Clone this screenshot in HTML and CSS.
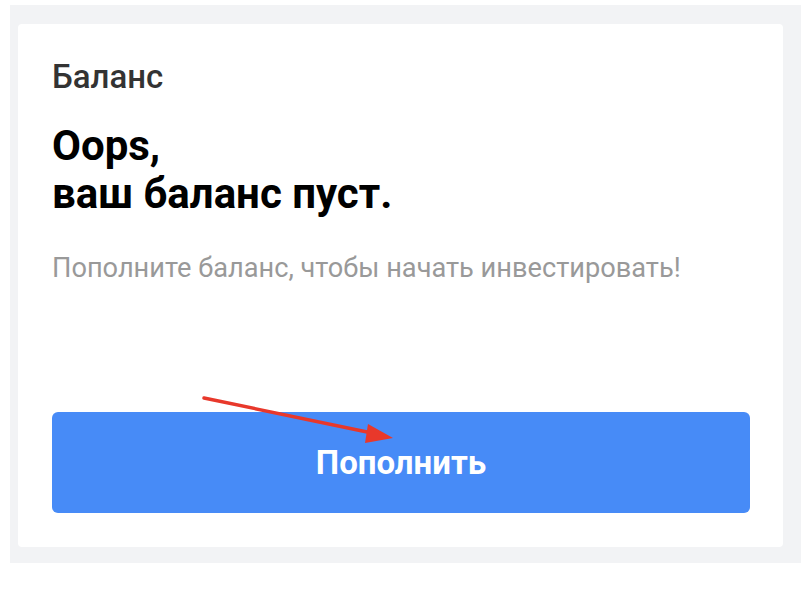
FILE: index.html
```html
<!DOCTYPE html>
<html lang="ru">
<head>
<meta charset="utf-8">
<title>Баланс</title>
<link rel="stylesheet" href="styles.css">
</head>
<body>
<div class="frame">
  <div class="card">
    <div class="title">Баланс</div>
    <h1 class="heading">Oops,<br>ваш баланс пуст.</h1>
    <p class="subtitle">Пополните баланс, чтобы начать инвестировать!</p>
    <div class="spacer"></div>
    <button class="btn">Пополнить</button>
  </div>
</div>
<svg class="arrow" width="810" height="590" viewBox="0 0 810 590">
  <line x1="204" y1="398" x2="372" y2="433" stroke="#e8382b" stroke-width="3.5" stroke-linecap="round"/>
  <polygon points="393,438 368,424 365,443" fill="#e8382b"/>
</svg>
</body>
</html>
```
FILE: styles.css
```css
html, body {
  margin: 0;
  padding: 0;
  background: #ffffff;
}
body {
  font-family: Roboto, "Liberation Sans", sans-serif;
  width: 810px;
  height: 590px;
  overflow: hidden;
  position: relative;
}
.frame {
  margin: 5px 0 0 10px;
  width: 791px;
  height: 558px;
  box-sizing: border-box;
  padding: 19px 18px 16px 8px;
  background: #f2f3f5;
}
.card {
  height: 100%;
  box-sizing: border-box;
  background: #ffffff;
  border-radius: 4px;
  padding: 33px 33px 34px 34px;
  display: flex;
  flex-direction: column;
}
.title {
  font-size: 33px;
  line-height: 40px;
  font-weight: 500;
  color: #333333;
}
.heading {
  margin: 25px 0 0 0;
  font-size: 42px;
  line-height: 48px;
  font-weight: 700;
  color: #000000;
}
.subtitle {
  margin: 34px 0 0 0;
  font-size: 27.2px;
  line-height: 32px;
  color: #999999;
}
.spacer {
  flex: 1;
}
.btn {
  height: 101px;
  border: none;
  border-radius: 6px;
  background: #478bf7;
  color: #ffffff;
  font-family: Roboto, "Liberation Sans", sans-serif;
  font-size: 33px;
  font-weight: 700;
  padding: 0;
}
.arrow {
  position: absolute;
  left: 0;
  top: 0;
  pointer-events: none;
}
```
